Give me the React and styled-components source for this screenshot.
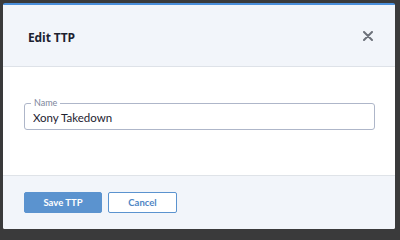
import React, { useState } from "react";
import styled, { createGlobalStyle } from "styled-components";

const GlobalStyle = createGlobalStyle`
  html, body {
    margin: 0;
    padding: 0;
    background: #3a3a3b;
    font-family: Lato, "Open Sans", sans-serif;
  }
`;

export default function App() {
  const [name, setName] = useState("Xony Takedown");

  return (
    <>
      <GlobalStyle />
      <Backdrop>
        <Modal>
          <Header>
            <Title>Edit TTP</Title>
            <CloseBtn aria-label="Close">
              <svg width="10" height="10" viewBox="0 0 10 10">
                <path
                  d="M1 1 L9 9 M9 1 L1 9"
                  stroke="#6d717a"
                  strokeWidth="2"
                  strokeLinecap="round"
                />
              </svg>
            </CloseBtn>
          </Header>

          <Body>
            <Field>
              <Label>Name</Label>
              <Input value={name} onChange={(e) => setName(e.target.value)} />
            </Field>
          </Body>

          <Footer>
            <Btn primary>Save TTP</Btn>
            <Btn>Cancel</Btn>
          </Footer>
        </Modal>
      </Backdrop>
    </>
  );
}

const Backdrop = styled.div`
  width: 400px;
  height: 233px;
  padding: 3px 5px 4px 3px;
  box-sizing: border-box;
`;

const Modal = styled.div`
  width: 392px;
  height: 226px;
  display: flex;
  flex-direction: column;
  background: #fff;
  border-top: 2px solid #4a8fdb;
  border-radius: 2px;
  overflow: hidden;
  box-sizing: border-box;
`;

const Header = styled.div`
  height: 62px;
  display: flex;
  align-items: center;
  justify-content: space-between;
  padding: 0 22px 0 25px;
  background: #f2f5fa;
  border-bottom: 1px solid #dee2e8;
  box-sizing: border-box;
  flex-shrink: 0;
`;

const Title = styled.h2`
  margin: 0;
  padding-top: 4px;
  font-family: "Open Sans", sans-serif;
  font-size: 12px;
  font-weight: 700;
  letter-spacing: -0.1px;
  color: #1d2230;
`;

const CloseBtn = styled.button`
  display: flex;
  padding: 0;
  border: 0;
  background: none;
  cursor: pointer;
`;

const Body = styled.div`
  flex: 1;
  padding: 36px 20px 0 21px;
`;

const Field = styled.div`
  position: relative;
`;

const Label = styled.span`
  position: absolute;
  left: 7px;
  top: -5px;
  padding: 0 3px;
  background: #fff;
  font-size: 9px;
  line-height: 9px;
  color: #7d869c;
`;

const Input = styled.input`
  display: block;
  width: 100%;
  height: 27px;
  box-sizing: border-box;
  border: 1.5px solid #aeb6c9;
  border-radius: 3px;
  outline: none;
  padding: 2px 8px 0;
  font-family: Lato, "Open Sans", sans-serif;
  font-size: 11.5px;
  color: #1d2230;
  background: #fff;
`;

const Footer = styled.div`
  height: 54px;
  display: flex;
  align-items: flex-start;
  gap: 6px;
  padding: 16px 21px 0;
  background: #f2f5fa;
  border-top: 1px solid #dfe3e8;
  box-sizing: border-box;
  flex-shrink: 0;
`;

const Btn = styled.button`
  height: 21px;
  padding: 0;
  width: ${(p) => (p.primary ? "78px" : "69px")};
  border-radius: 2px;
  border: 1.5px solid #5b93cf;
  background: ${(p) => (p.primary ? "#5b93cf" : "#fff")};
  color: ${(p) => (p.primary ? "#fff" : "#4f86c4")};
  font-family: Lato, "Open Sans", sans-serif;
  font-size: 9.5px;
  font-weight: 700;
  cursor: pointer;
`;
